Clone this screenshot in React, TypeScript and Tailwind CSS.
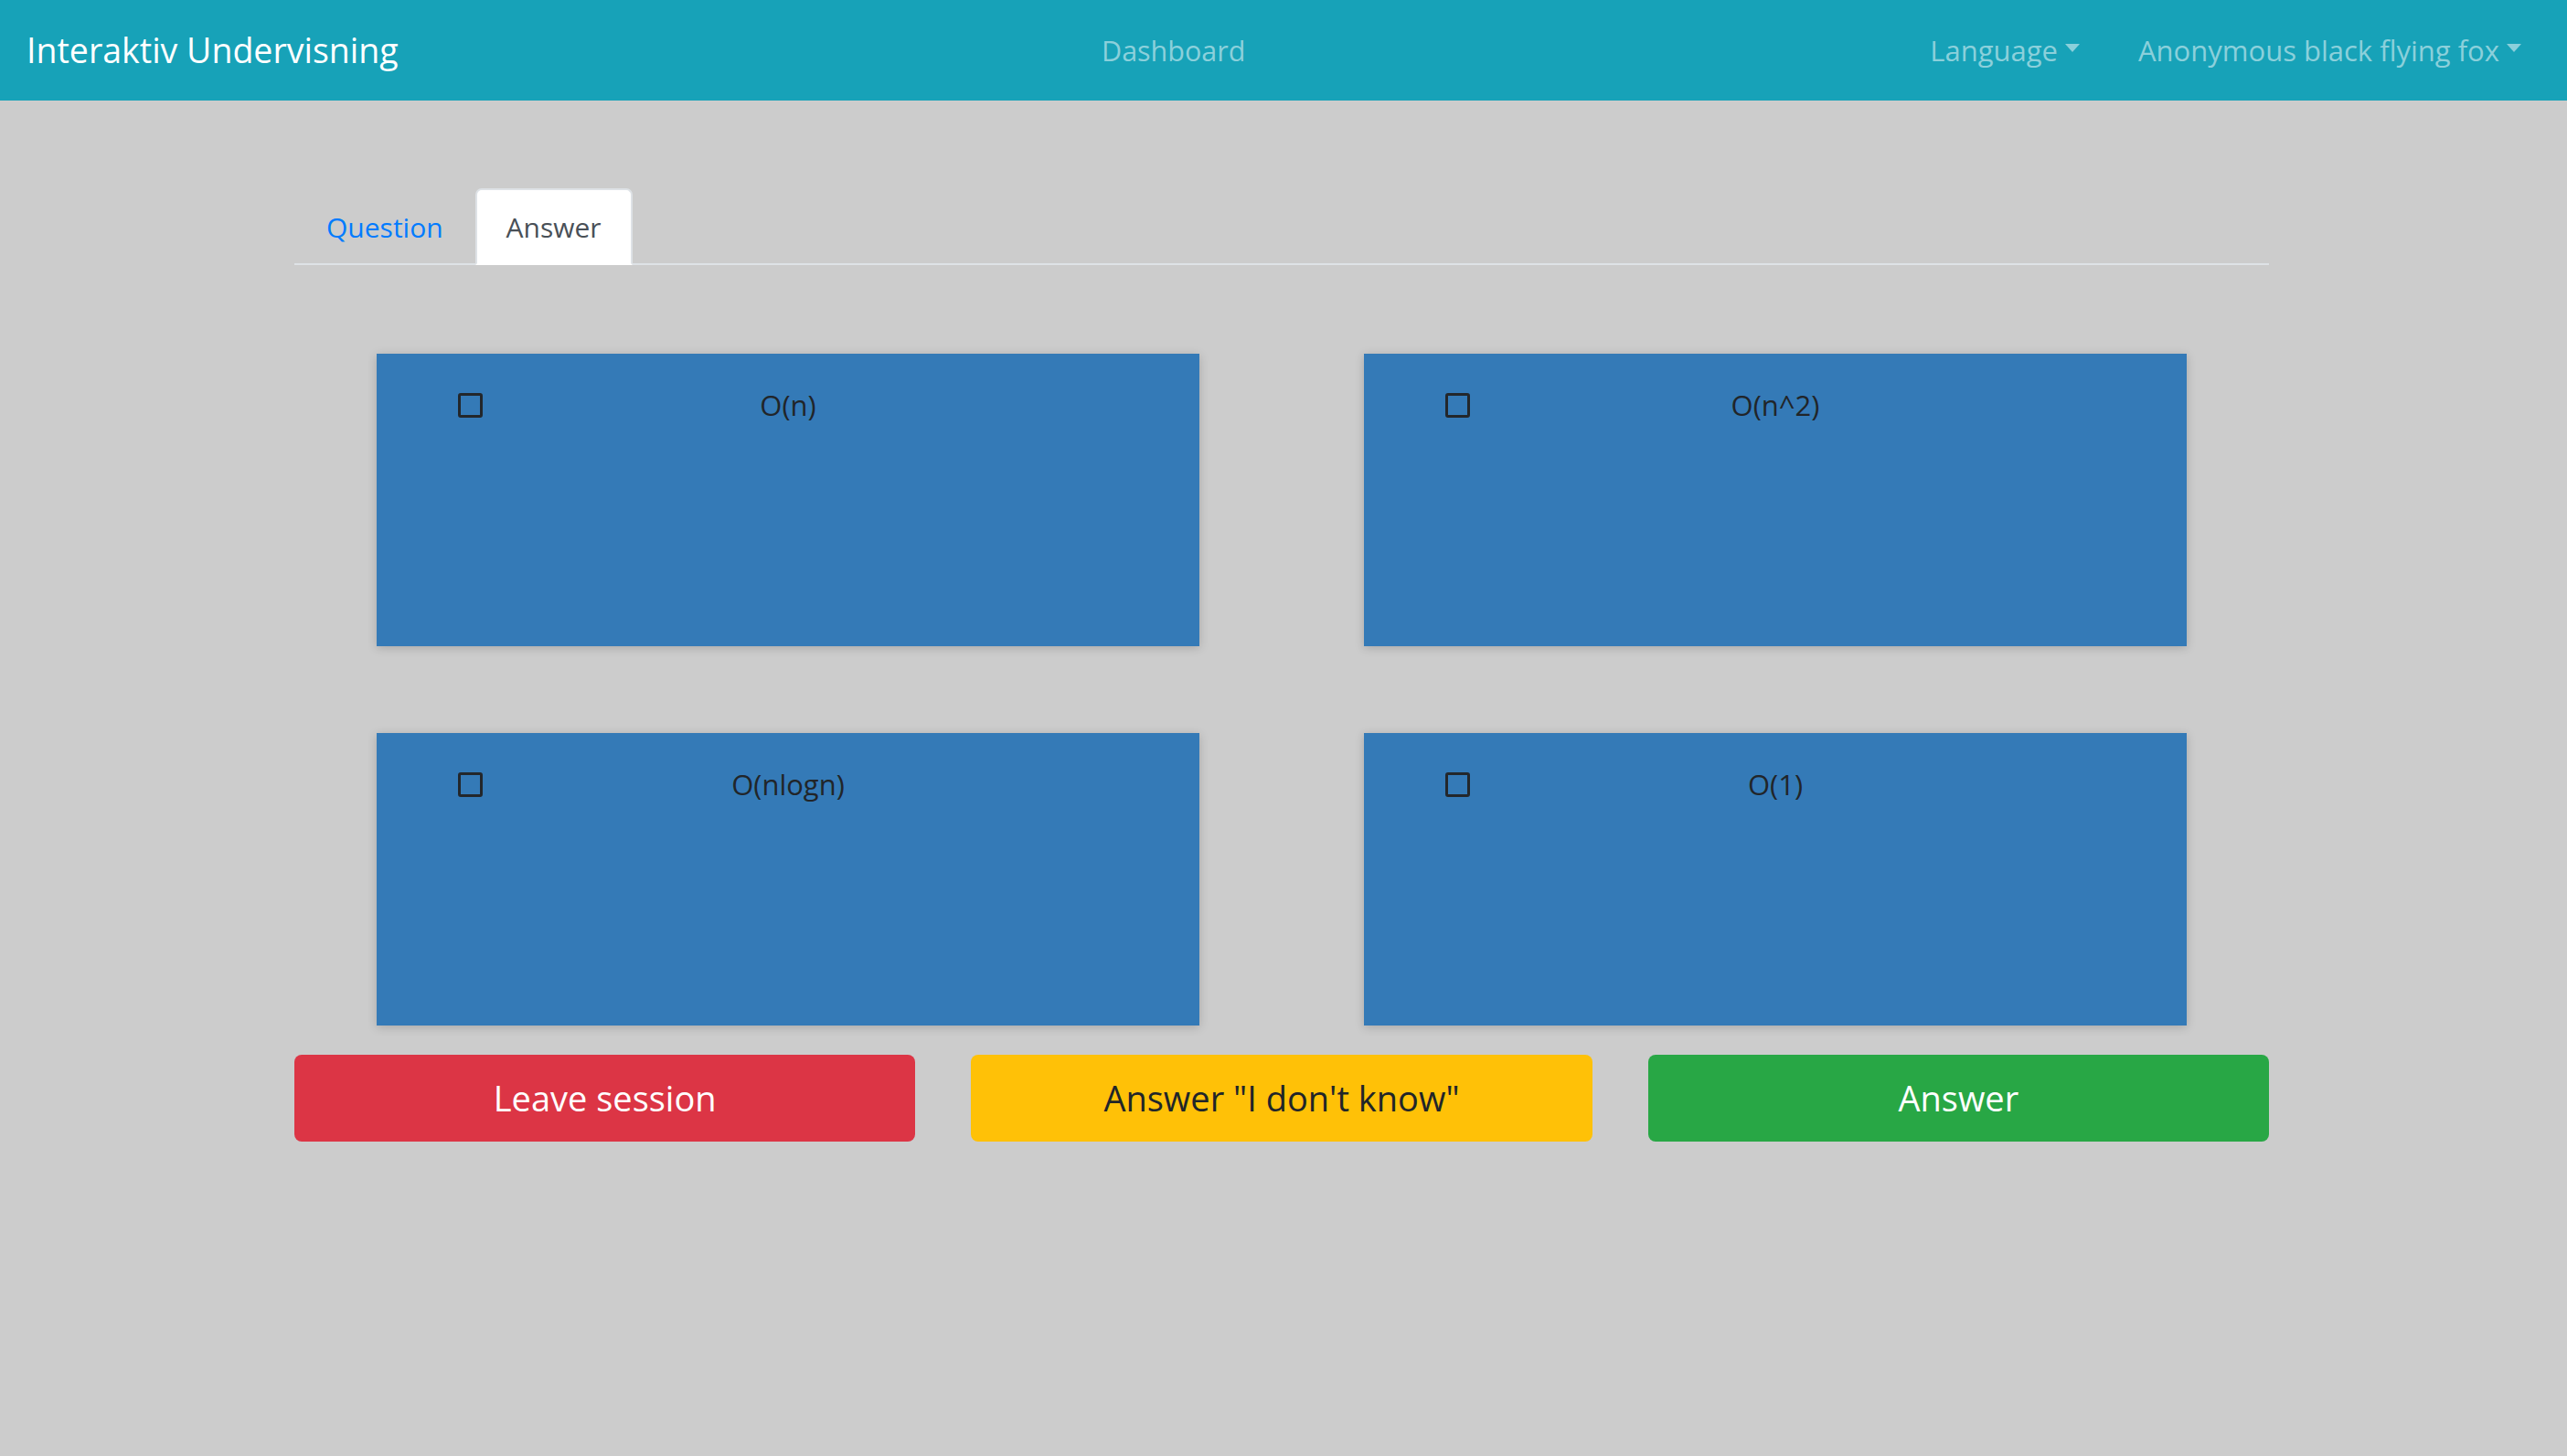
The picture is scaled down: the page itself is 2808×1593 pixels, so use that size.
import React from "react";

function Caret() {
  return (
    <span className="ml-[8px] inline-block h-0 w-0 -translate-y-[3px] border-x-[8px] border-t-[9px] border-b-0 border-x-transparent border-t-[#8bd0db]" />
  );
}

const options = ["O(n)", "O(n^2)", "O(nlogn)", "O(1)"];

export default function App() {
  return (
    <div className="min-h-screen bg-[#cccccc] font-['Open_Sans',sans-serif]">
      <nav className="flex h-[110px] items-center bg-[#17a2b8] pl-[29px] pr-[50px]">
        <div className="w-[1176px] text-[37.5px] leading-none text-white">Interaktiv Undervisning</div>
        <div className="text-[30.5px] leading-none text-[#8bd0db]">Dashboard</div>
        <div className="ml-auto flex items-center gap-[64px] text-[31px] leading-none text-[#8bd0db]">
          <span className="flex items-center">
            Language
            <Caret />
          </span>
          <span className="flex items-center">
            Anonymous black flying fox
            <Caret />
          </span>
        </div>
      </nav>

      <main className="pl-[322px] pt-[96px]">
        <div className="w-[2160px]">
          <div className="flex border-b-2 border-[#dee2e6]">
            <div className="-mb-[2px] flex h-[84px] items-center border-2 border-transparent px-[33px] text-[30px] text-[#007bff]">
              Question
            </div>
            <div className="-mb-[2px] flex h-[84px] items-center rounded-t-[7px] border-2 border-[#dee2e6] border-b-white bg-white px-[32px] text-[30px] text-[#495057]">
              Answer
            </div>
          </div>

          <div className="grid grid-cols-2 gap-y-[95px] pt-[97px]">
            {options.map((o) => (
              <div key={o} className="px-[90px]">
                <div className="h-[320px] bg-[#347ab7] pt-[36px] shadow-[0_2px_10px_rgba(0,0,0,0.18)]">
                  <div className="grid h-[40px] grid-cols-[1fr_auto_1fr] items-center">
                    <div className="pl-[89px]">
                      <div className="h-[27px] w-[27px] rounded-[3px] border-[3px] border-[#23272b]" />
                    </div>
                    <div className="text-[31px] leading-none text-[#212529]">{o}</div>
                    <div />
                  </div>
                </div>
              </div>
            ))}
          </div>

          <div className="mt-[32px] grid grid-cols-3 gap-[61px]">
            <button className="flex h-[95px] items-center justify-center rounded-[8px] bg-[#dc3545] text-[38px] text-white">
              Leave session
            </button>
            <button className="flex h-[95px] items-center justify-center rounded-[8px] bg-[#ffc107] text-[38px] text-[#212529]">
              Answer "I don't know"
            </button>
            <button className="flex h-[95px] items-center justify-center rounded-[8px] bg-[#28a745] text-[38px] text-white">
              Answer
            </button>
          </div>
        </div>
      </main>
    </div>
  );
}
